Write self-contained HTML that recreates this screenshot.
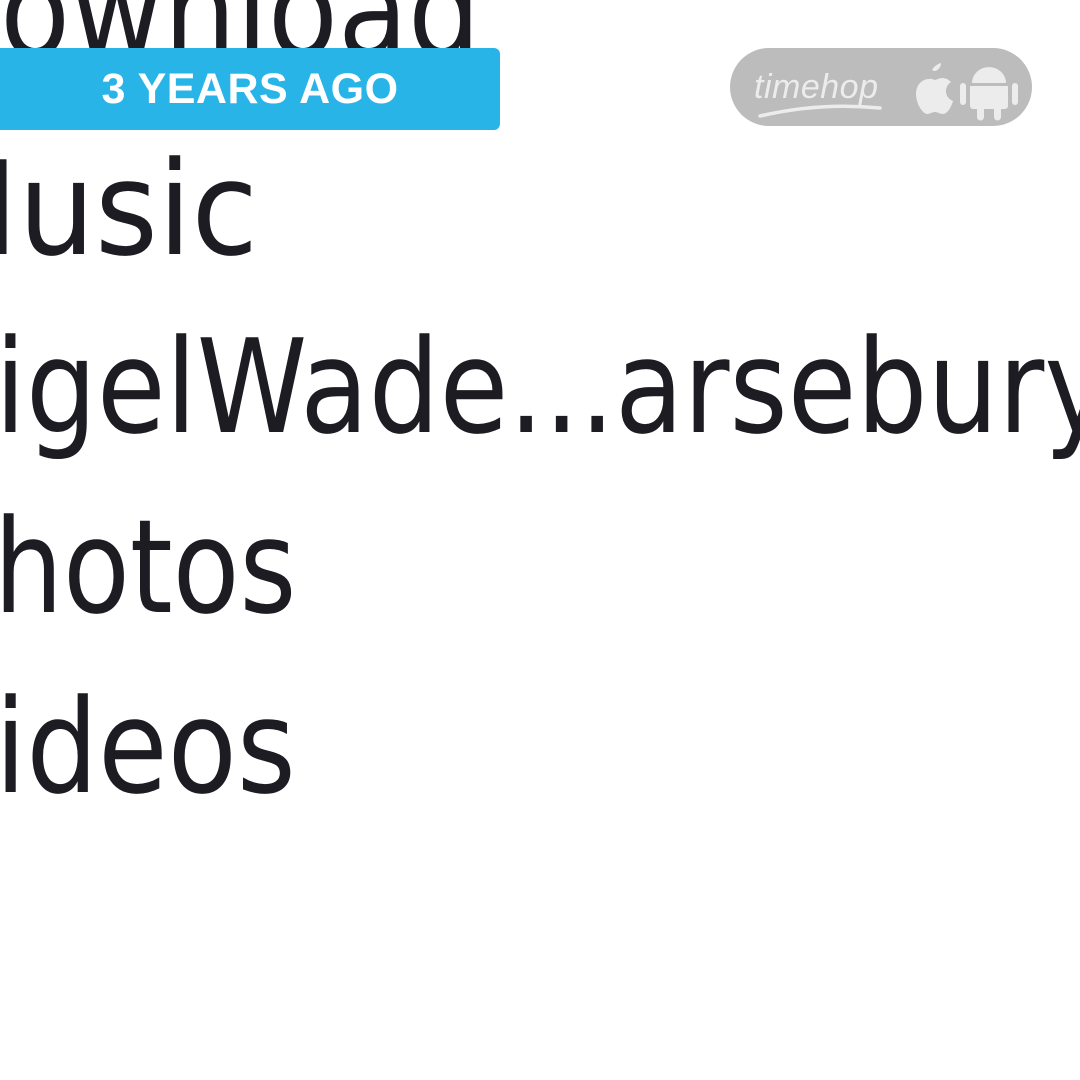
<!DOCTYPE html>
<html><head><meta charset="utf-8"><style>
body{margin:0;width:1080px;height:1080px;background:#fff;overflow:hidden;position:relative;font-family:"DejaVu Sans",sans-serif}
.t{position:absolute;font-family:"DejaVu Sans",sans-serif;font-size:130px;color:#1c1c22;white-space:nowrap;line-height:1;transform-origin:0 0}
.banner{position:absolute;left:0;top:48px;width:500px;height:82px;background:#29b4e8;border-radius:0 6px 6px 0;color:#fff;font-family:"Liberation Sans",sans-serif;font-weight:bold;font-size:43px;text-align:center;line-height:82px;letter-spacing:0.5px}
.pill{position:absolute;left:730px;top:48px;width:302px;height:78px;background:#bcbcbc;border-radius:39px}
</style></head><body>
<div class="t" style="left:-88px;top:-54px;transform:scaleX(0.88)">Download</div>
<div class="t" style="left:-86px;top:144px;transform:scaleX(0.93)">Music</div>
<div class="t" style="left:-76px;top:322px;transform:scaleX(0.86)">nigelWade...arsebury</div>
<div class="t" style="left:-72px;top:502px;transform:scaleX(0.84)">Photos</div>
<div class="t" style="left:-80px;top:682px;transform:scaleX(0.87)">Videos</div>
<div class="banner">3 YEARS AGO</div>
<div class="pill">
<svg width="302" height="78" viewBox="0 0 302 78">
<text x="24" y="50" font-family="Liberation Sans,sans-serif" font-style="italic" font-size="34" fill="#ececec" textLength="124">timehop</text>
<path d="M30 68 Q90 54 150 60" stroke="#ececec" stroke-width="3.5" fill="none" stroke-linecap="round"/>
<path d="M202 22c2-4 6-6 9-7 0 4-3 8-7 8zM199 31c-7 0-13 6-13 15 0 10 7 20 11 20 3 0 5-2 8-2s5 2 8 2c5 0 9-9 10-13-5-2-7-6-7-10 0-4 2-7 5-9-3-3-6-4-9-4-3 0-6 2-7 2s-3-2-6-1z" fill="#ececec"/>
<path d="M242 35a16 15 0 0 1 34 0zM240 38h38v20a3 3 0 0 1-3 3h-32a3 3 0 0 1-3-3zM236 38a3 3 0 0 0-6 0v16a3 3 0 0 0 6 0zM288 38a3 3 0 0 0-6 0v16a3 3 0 0 0 6 0zM247 60h7v9a3.5 3.5 0 0 1-7 0zM264 60h7v9a3.5 3.5 0 0 1-7 0z" fill="#ececec"/>
</svg>
</div>
</body></html>
